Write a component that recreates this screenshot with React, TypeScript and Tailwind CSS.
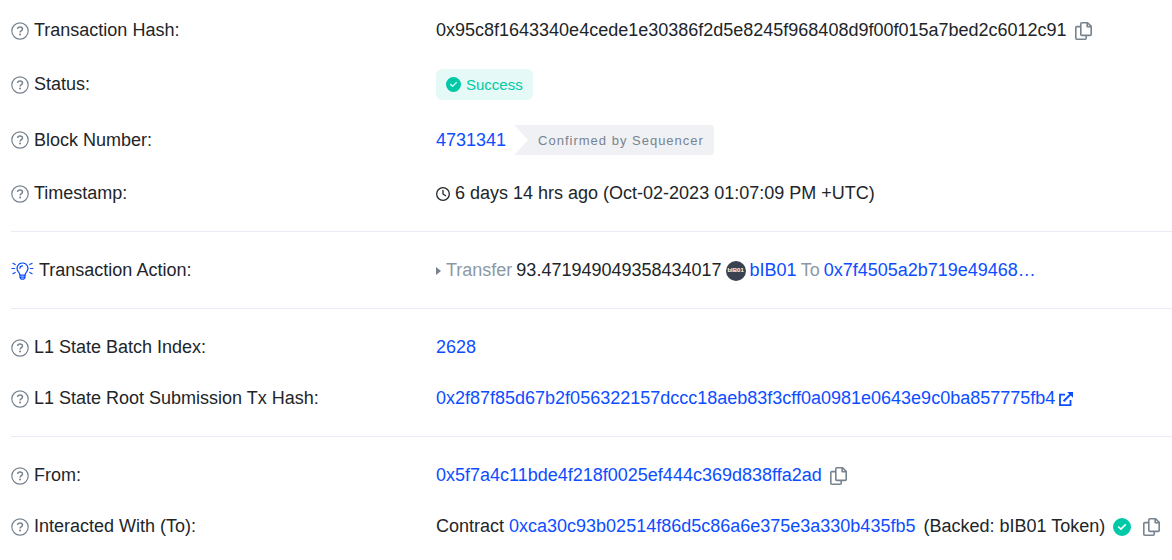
import React from 'react';
import { FaCircleCheck, FaRegClock } from 'react-icons/fa6';

const HelpIcon = () => (
  <svg viewBox="0 0 18 18" className="w-[18px] h-[18px] shrink-0 text-[#77838f]" fill="none" stroke="currentColor">
    <circle cx="9" cy="9" r="8.2" strokeWidth="1.2" />
    <path d="M6.5 6.9c.2-1.3 1.1-2 2.5-2 1.5 0 2.500.8 2.500 2 0 1.700-2.400 1.700-2.400 3.500" strokeWidth="1.5" />
    <circle cx="9.1" cy="12.600" r="1" fill="currentColor" stroke="none" />
  </svg>
);

const BulbIcon = () => (
  <svg
    viewBox="0 0 23 18"
    className="w-[23px] h-[18px] shrink-0 text-[#0d4dff]"
    fill="none"
    stroke="currentColor"
    strokeWidth="1.2"
    strokeLinecap="round"
    strokeLinejoin="round"
  >
    <path d="M9 13.2c-.2-1.6-.8-2.4-1.6-3.4A5.3 5.3 0 0 1 11.5 1a5.3 5.3 0 0 1 4.1 8.8c-.8 1-1.4 1.8-1.6 3.4z" />
    <path d="M9 13.2v2.4l1.2 1.600h2.600l1.200-1.600v-2.400M9 15.200h5M8.900 6.300a2.600 2.600 0 0 1 2.600-2.500" />
    <path d="M1 6.500h2.600M19.400 6.500H22M1.900 1.300l2.300 1.300M21.100 1.300l-2.300 1.300M1.900 11.700l2.300-1.300M21.100 11.700l-2.300-1.300" />
  </svg>
);

const ExternalIcon = () => (
  <svg viewBox="0 0 14 14" className="w-[14px] h-[14px] shrink-0" fill="none" stroke="currentColor" strokeWidth="1.8">
    <path d="M6 2.6H1v10.5h10.5V8" />
    <path d="M4.600 9.200L12.200 1.600" strokeWidth="2" />
    <path d="M8.200 0H14v5.800z" fill="currentColor" stroke="none" />
  </svg>
);

const CopyButton: React.FC<{ label: string }> = ({ label }) => (
  <button type="button" aria-label={label} className="shrink-0 text-[#77838f] cursor-pointer">
    <svg viewBox="0 0 17 18" className="w-[17px] h-[18px]" fill="none" stroke="currentColor" strokeWidth="1.6" strokeLinejoin="round">
      <path d="M6.800.8h5.800l3.600 3.600v8a1 1 0 0 1-1 1H6.800a1 1 0 0 1-1-1V1.800a1 1 0 0 1 1-1z" />
      <path d="M12.200 1v3.800H16" />
      <path d="M5.800 4.600h-4a1 1 0 0 0-1 1v10.600a1 1 0 0 0 1 1h8.400a1 1 0 0 0 1-1v-2.800" />
    </svg>
  </button>
);

interface RowProps {
  label: string;
  icon?: React.ReactNode;
  children: React.ReactNode;
}

const Row: React.FC<RowProps> = ({ label, icon = <HelpIcon />, children }) => (
  <div className="flex items-center">
    <dt className="flex items-center gap-[5px] w-[425px] shrink-0">
      {icon}
      <span>{label}</span>
    </dt>
    <dd className="flex items-center min-w-0 whitespace-nowrap">{children}</dd>
  </div>
);

const Link: React.FC<{ children: React.ReactNode }> = ({ children }) => (
  <a href="#" className="text-[#0d4dff]">
    {children}
  </a>
);

const Section: React.FC<{ children: React.ReactNode }> = ({ children }) => (
  <dl className="flex flex-col gap-6 first:gap-[25px] pt-[25px] first:pt-[17px] pb-6 border-b border-[#e9ecf4] last:border-b-0">
    {children}
  </dl>
);

const App: React.FC = () => {
  return (
    <main className="bg-white pl-[11px] font-['Liberation_Sans',Arial,sans-serif] text-lg leading-[27px] text-[#212529]">
      <Section>
        <Row label="Transaction Hash:">
          <span className="mr-2">0x95c8f1643340e4cede1e30386f2d5e8245f968408d9f00f015a7bed2c6012c91</span>
          <CopyButton label="Copy transaction hash" />
        </Row>
        <Row label="Status:">
          <span className="flex items-center gap-[5px] h-[31px] px-[10px] rounded-md bg-[#e5f9f6] text-[15px] text-[#00c9a7]">
            <FaCircleCheck className="w-[15px] h-[15px]" />
            Success
          </span>
        </Row>
        <Row label="Block Number:">
          <Link>4731341</Link>
          <span className="flex items-center h-[30px] ml-2 pl-6 pr-[10px] rounded-r bg-[#f0f1f4] text-[13px] tracking-[1px] text-[#77838f] [clip-path:polygon(0_0,100%_0,100%_100%,0_100%,14px_50%)]">
            Confirmed by Sequencer
          </span>
        </Row>
        <Row label="Timestamp:">
          <FaRegClock className="w-[14px] h-[14px] mr-[5px]" />
          <span>6 days 14 hrs ago (Oct-02-2023 01:07:09 PM +UTC)</span>
        </Row>
      </Section>

      <Section>
        <Row label="Transaction Action:" icon={<BulbIcon />}>
          <svg viewBox="0 0 5 8" className="w-[5px] h-2 mr-[5px] text-[#77838f]" fill="currentColor">
            <path d="M0 0l5 4-5 4z" />
          </svg>
          <span className="flex items-center gap-1">
            <span className="text-[#8c98a4]">Transfer</span>
            <span>93.471949049358434017</span>
            <span className="flex items-center justify-center w-5 h-5 rounded-full bg-[#3a4150] text-[6px] font-bold text-white">
              bIB01
            </span>
            <Link>bIB01</Link>
            <span className="text-[#8c98a4]">To</span>
            <Link>0x7f4505a2b719e49468…</Link>
          </span>
        </Row>
      </Section>

      <Section>
        <Row label="L1 State Batch Index:">
          <Link>2628</Link>
        </Row>
        <Row label="L1 State Root Submission Tx Hash:">
          <a href="#" className="flex items-center gap-1 text-[#0d4dff]">
            0x2f87f85d67b2f056322157dccc18aeb83f3cff0a0981e0643e9c0ba857775fb4
            <ExternalIcon />
          </a>
        </Row>
      </Section>

      <Section>
        <Row label="From:">
          <span className="mr-2">
            <Link>0x5f7a4c11bde4f218f0025ef444c369d838ffa2ad</Link>
          </span>
          <CopyButton label="Copy sender address" />
        </Row>
        <Row label="Interacted With (To):">
          <span className="mr-2">
            Contract <Link>0xca30c93b02514f86d5c86a6e375e3a330b435fb5</Link>
          </span>
          <span className="mr-2">(Backed: bIB01 Token)</span>
          <FaCircleCheck className="w-[18px] h-[18px] mr-3 shrink-0 text-[#00c9a7]" />
          <CopyButton label="Copy contract address" />
        </Row>
      </Section>
    </main>
  );
};

export default App;
